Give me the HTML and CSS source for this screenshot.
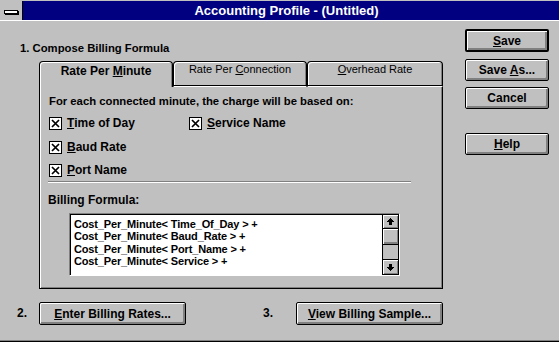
FILE: index.html
```html
<!DOCTYPE html>
<html>
<head>
<meta charset="utf-8">
<title>Accounting Profile</title>
<link rel="stylesheet" href="styles.css">
</head>
<body>
<div class="window">
  <div class="titlebar">
    <div class="sysmenu"><span class="sysbar"></span></div>
    <div class="title">Accounting Profile - (Untitled)</div>
  </div>
  <div class="body">
    <div class="main">
      <div class="step1">1. Compose Billing Formula</div>
      <div class="tabs">
        <div class="tabrow">
          <div class="tab tab1 active">Rate Per <u>M</u>inute</div>
          <div class="tab tab2">Rate Per <u>C</u>onnection</div>
          <div class="tab tab3"><u>O</u>verhead Rate</div>
        </div>
        <div class="panel">
          <div class="intro">For each connected minute, the charge will be based on:</div>
          <div class="checks">
            <div class="check c-time"><svg class="cb" width="13" height="13" viewBox="0 0 13 13"><rect x="0.5" y="0.5" width="12" height="12" fill="#fff" stroke="#000"/><path d="M3 3L10 10M10 3L3 10" stroke="#000" stroke-width="1.7"/></svg><span><u>T</u>ime of Day</span></div>
            <div class="check c-service"><svg class="cb" width="13" height="13" viewBox="0 0 13 13"><rect x="0.5" y="0.5" width="12" height="12" fill="#fff" stroke="#000"/><path d="M3 3L10 10M10 3L3 10" stroke="#000" stroke-width="1.7"/></svg><span><u>S</u>ervice Name</span></div>
            <div class="check c-baud"><svg class="cb" width="13" height="13" viewBox="0 0 13 13"><rect x="0.5" y="0.5" width="12" height="12" fill="#fff" stroke="#000"/><path d="M3 3L10 10M10 3L3 10" stroke="#000" stroke-width="1.7"/></svg><span><u>B</u>aud Rate</span></div>
            <div class="check c-port"><svg class="cb" width="13" height="13" viewBox="0 0 13 13"><rect x="0.5" y="0.5" width="12" height="12" fill="#fff" stroke="#000"/><path d="M3 3L10 10M10 3L3 10" stroke="#000" stroke-width="1.7"/></svg><span><u>P</u>ort Name</span></div>
          </div>
          <div class="sep"></div>
          <div class="bf-label">Billing Formula:</div>
          <div class="listbox">
            <div class="lb-text">
              <div>Cost_Per_Minute&lt; Time_Of_Day &gt; +</div>
              <div>Cost_Per_Minute&lt; Baud_Rate &gt; +</div>
              <div>Cost_Per_Minute&lt; Port_Name &gt; +</div>
              <div>Cost_Per_Minute&lt; Service &gt; +</div>
            </div>
            <div class="scrollbar">
              <div class="sb-btn sb-up"><svg width="7" height="7" viewBox="0 0 7 7" shape-rendering="crispEdges"><path d="M3 0h1v1h1v1h1v1h1v1H5v3H2V4H0V3h1V2h1V1h1z" fill="#000"/></svg></div>
              <div class="sb-thumb"></div>
              <div class="sb-track"></div>
              <div class="sb-btn sb-down"><svg width="7" height="7" viewBox="0 0 7 7" shape-rendering="crispEdges"><path transform="matrix(1 0 0 -1 0 7)" d="M3 0h1v1h1v1h1v1h1v1H5v3H2V4H0V3h1V2h1V1h1z" fill="#000"/></svg></div>
            </div>
          </div>
        </div>
      </div>
      <div class="steps">
        <span class="num num2">2.</span>
        <button class="btn btn-wide"><span><u>E</u>nter Billing Rates...</span></button>
        <span class="num num3">3.</span>
        <button class="btn btn-wide"><span><u>V</u>iew Billing Sample...</span></button>
      </div>
    </div>
    <div class="side">
      <button class="btn btn-side btn-default"><span><u>S</u>ave</span></button>
      <button class="btn btn-side btn-saveas"><span>Save <u>A</u>s...</span></button>
      <button class="btn btn-side btn-cancel"><span>Cancel</span></button>
      <button class="btn btn-side"><span><u>H</u>elp</span></button>
    </div>
  </div>
</div>
</body>
</html>
```
FILE: styles.css
```css
* { box-sizing: border-box; }
html, body { margin: 0; padding: 0; }
body {
  background: #c0c0c0;
  font-family: "Liberation Sans", Arial, sans-serif;
  font-size: 12px;
  font-weight: bold;
  color: #000;
}
u { text-decoration: underline; text-decoration-thickness: 1px; text-underline-offset: 1px; }

.window {
  width: 559px;
  height: 342px;
  display: flex;
  flex-direction: column;
  padding-top: 1px;
  border-bottom: 1px solid #000;
  box-shadow: inset 0 -1px 0 #808080;
}

.titlebar {
  height: 20px;
  display: flex;
  border-bottom: 1px solid #fff;
  flex: none;
}
.sysmenu {
  width: 23px;
  background: #c0c0c0;
  border-right: 1px solid #000;
  display: flex;
  justify-content: center;
  padding-top: 9px;
}
.sysbar {
  display: block;
  width: 14px;
  height: 4px;
  background: #fff;
  border: 1px solid #000;
  box-shadow: 1px 1px 0 #000;
}
.title {
  flex: 1;
  background: #000080;
  color: #fff;
  font-size: 13px;
  line-height: 19px;
  text-align: center;
  padding-right: 9px;
}

.body { display: flex; flex: 1; }
.main { width: 450px; flex: none; }

.step1 { margin: 21px 0 0 20px; line-height: 13px; height: 13px; font-size: 11.3px; }

.tabs { margin: 6px 0 0 39px; width: 404px; }
.tabrow { display: flex; height: 26px; }
.tab {
  height: 26px;
  border: 1px solid #000;
  border-bottom: 1px solid #fff;
  border-radius: 4px 4px 0 0;
  box-shadow: inset 0 -1px 0 #000, inset 1px 1px 0 #fff, inset -1px 0 0 #808080;
  font-weight: normal;
  font-size: 11px;
  line-height: 13px;
  text-align: center;
  padding-top: 1px;
  white-space: nowrap;
}
.tab1 { width: 134px; }
.tab2 { width: 134px; }
.tab3 { width: 136px; }
.tab.active {
  border-bottom: none;
  box-shadow: inset 1px 1px 0 #fff, inset -1px 0 0 #808080;
  font-weight: bold;
  font-size: 12px;
  padding-top: 3px;
}

.panel {
  height: 202px;
  border: 1px solid #000;
  border-top: none;
  box-shadow: inset 1px 0 0 #fff, inset -1px -1px 0 #808080;
  padding: 8px 0 0 8px;
}
.intro { line-height: 13px; height: 13px; white-space: nowrap; font-size: 11.3px; padding-left: 1px; }

.checks {
  display: grid;
  grid-template-columns: 140px auto;
  grid-template-rows: 24px 23px 13px;
  margin: 9px 0 0 1px;
}
.check { display: flex; align-items: center; gap: 5px; height: 13px; line-height: 13px; }
.cb { flex: none; display: block; }
.c-time { grid-row: 1; grid-column: 1; }
.c-service { grid-row: 1; grid-column: 2; }
.c-baud { grid-row: 2; grid-column: 1; }
.c-port { grid-row: 3; grid-column: 1; }

.sep {
  margin-top: 4px;
  width: 363px;
  height: 2px;
  border-top: 1px solid #808080;
  border-bottom: 1px solid #fff;
}
.bf-label { margin-top: 11px; line-height: 13px; height: 13px; }

.listbox {
  margin: 6px 0 0 21px;
  width: 331px;
  height: 63px;
  display: flex;
  border: 1px solid;
  border-color: #808080 #fff #fff #808080;
}
.lb-text {
  flex: 1;
  background: #fff;
  border-top: 1px solid #000;
  border-left: 1px solid #000;
  padding: 3px 0 0 3px;
  font-size: 11px;
  letter-spacing: -0.15px;
  line-height: 12.4px;
  white-space: nowrap;
  overflow: hidden;
}
.scrollbar {
  width: 17px;
  flex: none;
  display: flex;
  flex-direction: column;
  border: 1px solid #000;
}
.sb-btn {
  display: flex;
  align-items: center;
  justify-content: center;
  background: #c0c0c0;
  box-shadow: inset 1px 1px 0 #fff, inset -1px -1px 0 #808080;
}
.sb-up { height: 14px; border-bottom: 1px solid #000; }
.sb-down { height: 15px; border-top: 1px solid #000; }
.sb-thumb {
  height: 16px;
  border-bottom: 1px solid #000;
  background: #c0c0c0;
  box-shadow: inset 1px 1px 0 #fff, inset -1px -2px 0 #808080;
}
.sb-track { flex: 1; background: #c0c0c0; }

.btn {
  display: flex;
  align-items: center;
  justify-content: center;
  font: inherit;
  color: #000;
  background: #c0c0c0;
  border: 1px solid #000;
  border-radius: 2px;
  padding: 0;
  box-shadow: inset 1px 1px 0 #fff, inset -1px -1px 0 #808080, inset -2px -2px 0 #808080;
  white-space: nowrap;
}

.steps { display: flex; align-items: center; margin-top: 13px; height: 23px; }
.num { line-height: 13px; }
.num2 { margin-left: 17px; width: 22px; }
.num3 { margin-left: 77px; width: 33px; }
.btn-wide { width: 147px; height: 23px; }

.side {
  display: flex;
  flex-direction: column;
  padding-top: 8px;
  margin-left: 15px;
}
.btn-side { width: 84px; height: 22px; }
.btn-default { height: 23px; border-width: 2px; margin-bottom: 7px; }
.btn-saveas { margin-bottom: 6px; }
.btn-cancel { margin-bottom: 24px; }
```
